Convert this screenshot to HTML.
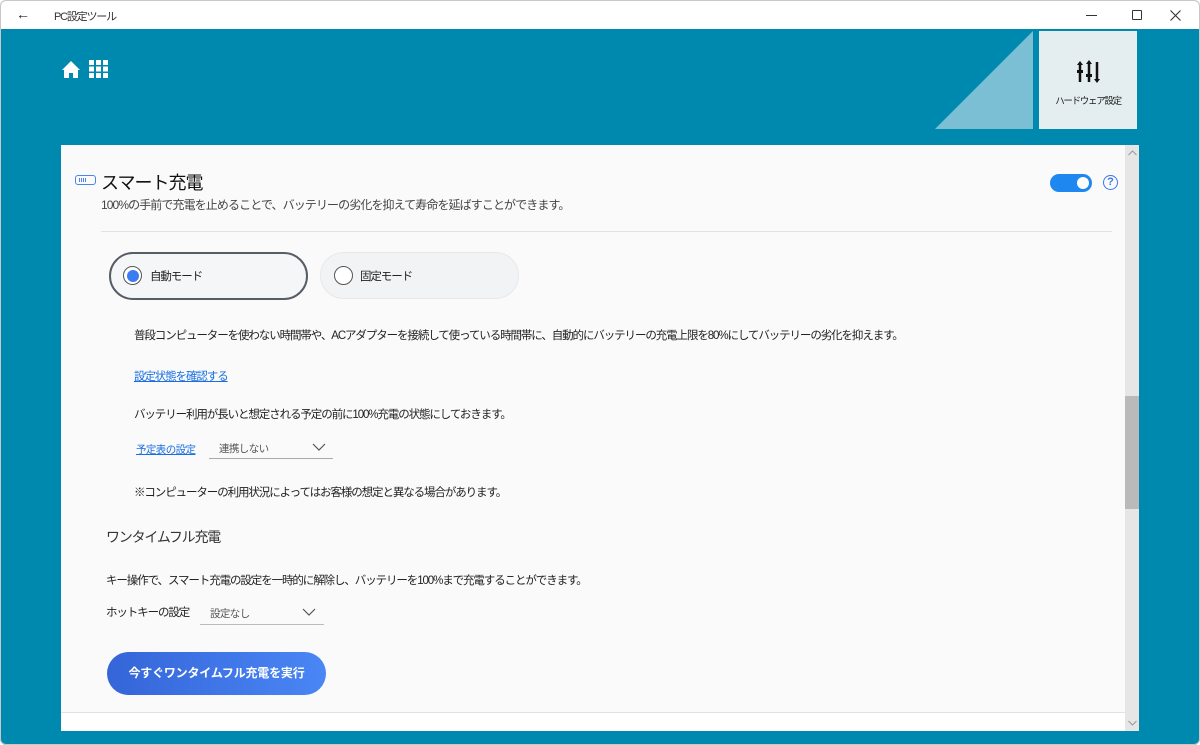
<!DOCTYPE html>
<html><head><meta charset="utf-8"><style>
*{margin:0;padding:0;box-sizing:border-box}
body{width:1200px;height:745px;overflow:hidden;background:#fff;font-family:"Liberation Sans","Noto Sans CJK JP",sans-serif;color:#222;position:relative}
.a{position:absolute;white-space:nowrap}
.t12{font-size:11.5px;letter-spacing:-1.1px}
</style></head><body>
<div class="a" style="left:0;top:0;width:1200px;height:745px;border-radius:6px;overflow:hidden;background:#0089ae">
<div class="a" style="left:0;top:0;width:1200px;height:29px;background:#fff"></div>
<div class="a" style="left:16px;top:6px;font-size:14px">&#8592;</div>
<div class="a" style="left:54px;top:8px;font-size:11px;letter-spacing:-1.2px;color:#333">PC設定ツール</div>
<div class="a" style="left:1086px;top:15px;width:11px;height:1px;background:#333"></div>
<div class="a" style="left:1132px;top:10px;width:10px;height:10px;border:1px solid #333;border-radius:1px"></div>
<svg class="a" style="left:1170px;top:10px" width="11" height="11"><path d="M0.5 0.5 L10.5 10.5 M10.5 0.5 L0.5 10.5" stroke="#333" stroke-width="1.1"/></svg>

<svg class="a" style="left:62px;top:60px" width="48" height="20">
<path d="M0 10 L9 1 L18 10 L16 10 L16 18 L11 18 L11 13 L7 13 L7 18 L2 18 L2 10Z" fill="#fff"/>
<g fill="#fff"><rect x="27" y="0" width="5" height="5"/><rect x="34" y="0" width="5" height="5"/><rect x="41" y="0" width="5" height="5"/><rect x="27" y="6.5" width="5" height="5"/><rect x="34" y="6.5" width="5" height="5"/><rect x="41" y="6.5" width="5" height="5"/><rect x="27" y="13" width="5" height="5"/><rect x="34" y="13" width="5" height="5"/><rect x="41" y="13" width="5" height="5"/></g>
</svg>
<svg class="a" style="left:935px;top:31px" width="100" height="99"><path d="M98 0 L98 98 L0 98 Z" fill="#7bbfd4"/></svg>
<div class="a" style="left:1039px;top:31px;width:98px;height:98px;background:#e4eef1"></div>
<svg class="a" style="left:1077px;top:60px" width="24" height="24">
<g stroke="#111" stroke-width="2.5" fill="#111"><line x1="3" y1="4" x2="3" y2="22"/><line x1="12" y1="2" x2="12" y2="22"/><line x1="20" y1="2" x2="20" y2="20"/></g>
<g fill="#111"><path d="M0 5 L3 1 L6 5Z"/><path d="M9 4 L12 0 L15 4Z"/><path d="M17 19 L20 23 L23 19Z"/><rect x="0" y="10" width="6" height="3"/><rect x="9" y="14" width="6" height="3"/></g>
</svg>
<div class="a" style="left:1039px;top:93px;width:98px;text-align:center;font-size:9.5px;letter-spacing:-1.3px;color:#222">ハードウェア設定</div>

<div class="a" style="left:61px;top:145px;width:1078px;height:586px;background:#fafafa">
<div class="a" style="left:1064px;top:0;width:14px;height:586px;background:#e6e6e6"></div>
<div class="a" style="left:1064px;top:251px;width:14px;height:113px;background:#bababa"></div>
<svg class="a" style="left:1067px;top:5px" width="9" height="6"><path d="M0.5 5 L4.5 1 L8.5 5" stroke="#999" fill="none"/></svg>
<svg class="a" style="left:1067px;top:575px" width="9" height="6"><path d="M0.5 1 L4.5 5 L8.5 1" stroke="#999" fill="none"/></svg>

<div class="a" style="left:14px;top:30px;width:21px;height:10px;border:1.5px solid #4b84f0;border-radius:3px"></div>
<div class="a" style="left:18px;top:33px;width:8px;height:4px;background:repeating-linear-gradient(90deg,#4b84f0 0 1px,transparent 1px 2px)"></div>
<div class="a" style="left:40px;top:24px;font-size:18px;letter-spacing:-1px;color:#111">スマート充電</div>
<div class="a" style="left:40px;top:51px;font-size:12px;letter-spacing:-0.9px;color:#444">100%の手前で充電を止めることで、バッテリーの劣化を抑えて寿命を延ばすことができます。</div>
<div class="a" style="left:989px;top:29px;width:42px;height:18px;border-radius:9px;background:#1e88f0"></div>
<div class="a" style="left:1016px;top:32px;width:12px;height:12px;border-radius:50%;background:#fff"></div>
<div class="a" style="left:1042px;top:30px;width:15px;height:15px;border-radius:50%;border:1.5px solid #3a78e8;color:#3a78e8;font-size:11px;font-weight:bold;text-align:center;line-height:12px">?</div>
<div class="a" style="left:40px;top:86px;width:1011px;height:1px;background:#e2e2e2"></div>

<div class="a" style="left:48px;top:107px;width:199px;height:48px;border:2px solid #555d66;border-radius:24px;background:#f5f6f7"></div>
<div class="a" style="left:62px;top:121px;width:19px;height:19px;border-radius:50%;border:1.5px solid #555;background:#fff"></div>
<div class="a" style="left:65.5px;top:124.5px;width:12px;height:12px;border-radius:50%;background:#3b7cf0"></div>
<div class="a t12" style="left:89px;top:123px">自動モード</div>
<div class="a" style="left:259px;top:107px;width:199px;height:47px;border:1px solid #e6e8ea;border-radius:24px;background:#f2f3f4"></div>
<div class="a" style="left:273px;top:121px;width:19px;height:19px;border-radius:50%;border:1.5px solid #555;background:#fff"></div>
<div class="a t12" style="left:299px;top:123px">固定モード</div>

<div class="a t12" style="left:73px;top:182px">普段コンピューターを使わない時間帯や、ACアダプターを接続して使っている時間帯に、自動的にバッテリーの充電上限を80%にしてバッテリーの劣化を抑えます。</div>
<div class="a t12" style="left:73px;top:223px;color:#1a6fe0;text-decoration:underline">設定状態を確認する</div>
<div class="a t12" style="left:73px;top:261px">バッテリー利用が長いと想定される予定の前に100%充電の状態にしておきます。</div>
<div class="a" style="left:75px;top:297px;font-size:10.5px;letter-spacing:-0.6px;color:#1a6fe0;text-decoration:underline">予定表の設定</div>
<div class="a" style="left:158px;top:296px;font-size:10.5px;letter-spacing:-0.6px;color:#555">連携しない</div>
<div class="a" style="left:148px;top:313px;width:124px;height:1px;background:#aaa"></div>
<svg class="a" style="left:251px;top:298px" width="14" height="9"><path d="M1 1 L7 7 L13 1" stroke="#555" fill="none" stroke-width="1.2"/></svg>
<div class="a t12" style="left:73px;top:339px">※コンピューターの利用状況によってはお客様の想定と異なる場合があります。</div>

<div class="a" style="left:45px;top:382px;font-size:14px;letter-spacing:-1.2px;color:#333">ワンタイムフル充電</div>
<div class="a t12" style="left:45px;top:427px">キー操作で、スマート充電の設定を一時的に解除し、バッテリーを100%まで充電することができます。</div>
<div class="a t12" style="left:45px;top:459px">ホットキーの設定</div>
<div class="a" style="left:149px;top:461px;font-size:10.5px;letter-spacing:-0.6px;color:#555">設定なし</div>
<div class="a" style="left:139px;top:479px;width:124px;height:1px;background:#bbb"></div>
<svg class="a" style="left:241px;top:463px" width="14" height="9"><path d="M1 1 L7 7 L13 1" stroke="#555" fill="none" stroke-width="1.2"/></svg>
<div class="a" style="left:46px;top:507px;width:219px;height:43px;border-radius:22px;background:linear-gradient(90deg,#3565d8,#4a86f5);color:#fff;font-size:12px;letter-spacing:-0.2px;font-weight:bold;text-align:center;line-height:43px">今すぐワンタイムフル充電を実行</div>
<div class="a" style="left:0;top:567px;width:1064px;height:1px;background:#e2e2e2"></div>
<div class="a" style="left:0;top:568px;width:1064px;height:18px;background:#fff"></div>
</div>
</div>
<div class="a" style="left:0;top:0;width:1200px;height:745px;border:1px solid #c8c8c8;border-radius:6px"></div>
</body></html>
